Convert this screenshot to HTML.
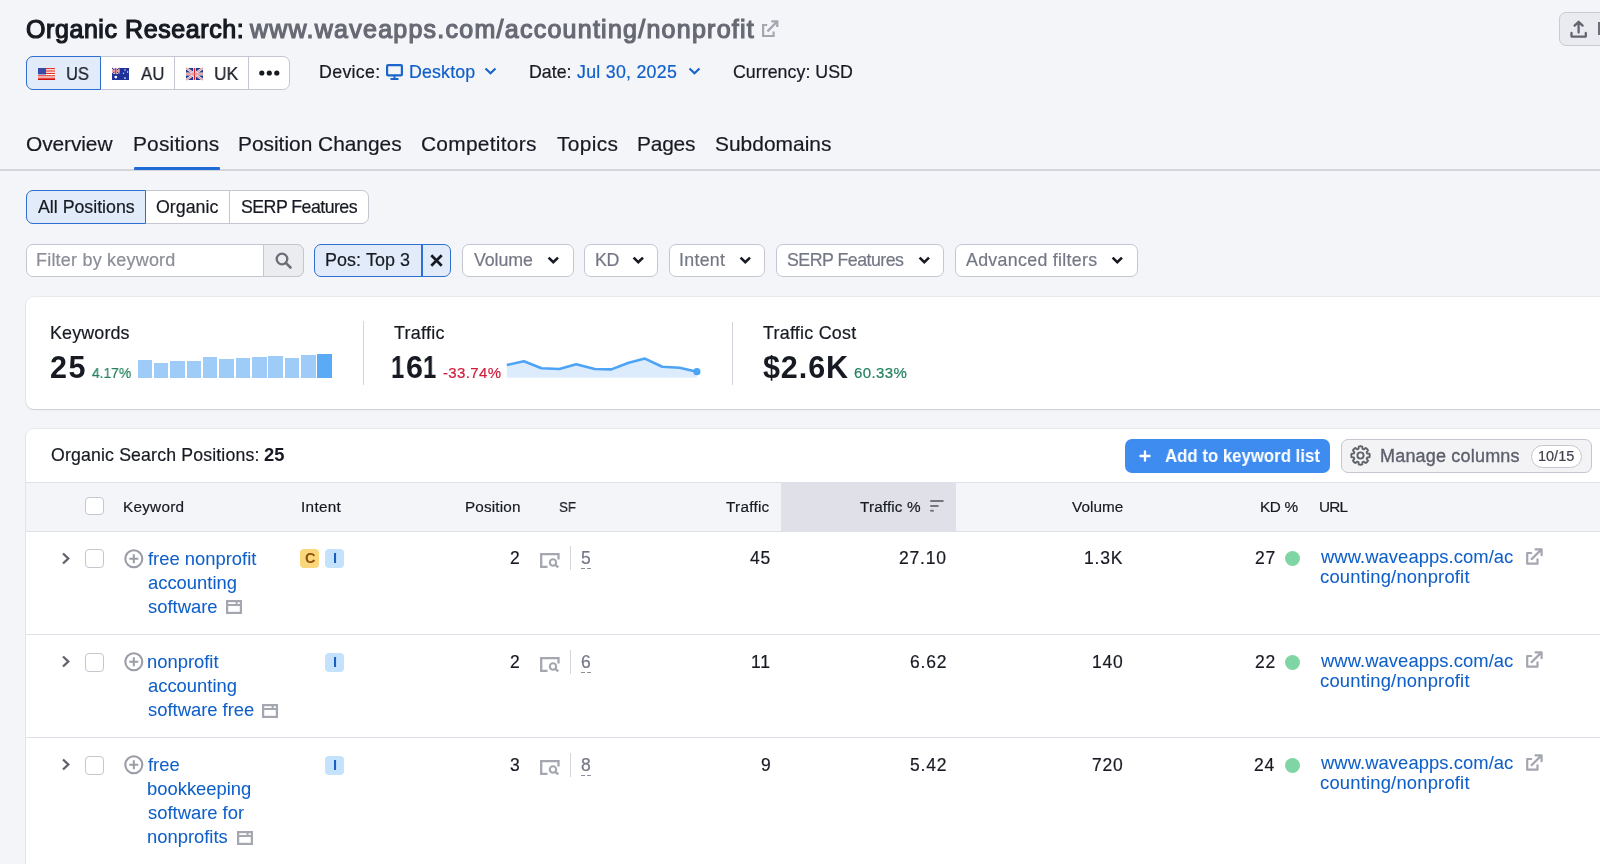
<!DOCTYPE html>
<html><head><meta charset="utf-8"><style>
html,body{margin:0;padding:0}
body{width:1600px;height:864px;overflow:hidden;position:relative;background:#f4f5f9;font-family:"Liberation Sans", sans-serif;}
.t{position:absolute;line-height:1;white-space:nowrap;-webkit-text-stroke:0.2px currentColor;will-change:transform}
svg{overflow:visible}
</style></head><body>
<svg style="position:absolute;left:762px;top:19.5px" width="17" height="17" viewBox="0 0 17 17"><g fill="none" stroke="#a4a6b0" stroke-width="2.2"><path d="M5.2 5H1.1V16H11.6V11.4"/><path d="M5.4 11.4L15 1.8M9.3 1.3H15.3V7.1"/></g></svg>
<div style="position:absolute;left:1559.3px;top:12.2px;width:80.70000000000005px;height:33.8px;box-sizing:border-box;background:#eaebf0;border:1px solid #c9cbd3;border-radius:7px;"></div>
<svg style="position:absolute;left:1569px;top:19px" width="20" height="20" viewBox="0 0 20 20"><g fill="none" stroke="#62646f" stroke-width="2.3" stroke-linecap="round" stroke-linejoin="round"><path d="M5.6 6.6L9.6 2.8L13.6 6.6M9.6 3.2V13.6"/><path d="M2.5 14V17.6H16.8V14"/></g></svg>
<div style="position:absolute;left:1598px;top:21.8px;width:2px;height:12.999999999999996px;box-sizing:border-box;background:#6b6d78;"></div>
<div style="position:absolute;left:26px;top:56px;width:263.5px;height:34px;box-sizing:border-box;background:#fff;border:1px solid #c4c7cf;border-radius:7px;"></div>
<div style="position:absolute;left:26px;top:56px;width:75px;height:34px;box-sizing:border-box;background:#e1ebf9;border:1.5px solid #2f6fd0;border-radius:7px 0 0 7px;"></div>
<div style="position:absolute;left:173.5px;top:57px;width:1.0px;height:32px;box-sizing:border-box;background:#c4c7cf;"></div>
<div style="position:absolute;left:248px;top:57px;width:1px;height:32px;box-sizing:border-box;background:#c4c7cf;"></div>
<svg style="position:absolute;left:38px;top:68px" width="17" height="12" viewBox="0 0 17 12">
<rect width="17" height="12" fill="#fff"/>
<rect y="0" width="17" height="1.2" fill="#e0362b"/><rect y="2.4" width="17" height="1.2" fill="#e0362b"/><rect y="4.8" width="17" height="1.2" fill="#e0362b"/><rect y="7.2" width="17" height="1.2" fill="#e0362b"/><rect y="9.6" width="17" height="1.2" fill="#e0362b"/><rect y="10.8" width="17" height="1.2" fill="#d40f0f"/>
<rect width="8" height="6.5" fill="#3a4aa8"/></svg>
<svg style="position:absolute;left:112px;top:68px" width="17" height="12" viewBox="0 0 17 12">
<rect width="17" height="12" fill="#1f3299"/><rect width="7.5" height="6" fill="#e9c4c8"/>
<path d="M0 0L7.5 6M7.5 0L0 6" stroke="#1f3299" stroke-width="1"/>
<path d="M0 3H7.5" stroke="#e9c4c8" stroke-width="1.6"/><path d="M3.7 0V6" stroke="#e9c4c8" stroke-width="1.6"/><path d="M3.7 0V6" stroke="#d8222b" stroke-width="1.1"/><path d="M0 3H7.5" stroke="#d86a70" stroke-width="0.8"/>
<circle cx="3.8" cy="9.1" r="1.4" fill="#fff"/><circle cx="13" cy="1.9" r=".75" fill="#fff"/><circle cx="15.6" cy="4" r=".75" fill="#fff"/><circle cx="11.5" cy="5.2" r=".7" fill="#dde"/><circle cx="13" cy="10" r=".85" fill="#fff"/></svg>
<svg style="position:absolute;left:186px;top:68px" width="17" height="12" viewBox="0 0 17 12">
<rect width="17" height="12" fill="#22378f"/>
<path d="M0 0L17 12M17 0L0 12" stroke="#f3e6e8" stroke-width="2.3"/><path d="M0 0L17 12M17 0L0 12" stroke="#d9656b" stroke-width="0.7"/>
<path d="M8.5 0V12M0 6H17" stroke="#f3e2e3" stroke-width="3"/><path d="M8.5 0V12" stroke="#d8222b" stroke-width="1.3"/><path d="M0 6H17" stroke="#e0777c" stroke-width="1.1"/></svg>
<svg style="position:absolute;left:259px;top:70px" width="21" height="6" viewBox="0 0 21 6"><circle cx="2.8" cy="3" r="2.6" fill="#171a22"/><circle cx="10.3" cy="3" r="2.6" fill="#171a22"/><circle cx="17.8" cy="3" r="2.6" fill="#171a22"/></svg>
<svg style="position:absolute;left:386px;top:64px" width="17" height="16" viewBox="0 0 17 16"><rect x="1.1" y="1.1" width="14.8" height="10.3" rx="1" fill="none" stroke="#1a64cc" stroke-width="2.2"/><path d="M8.5 12V14.5M4.5 14.9H12.5" stroke="#1a64cc" stroke-width="2"/></svg>
<svg style="position:absolute;left:484px;top:67px" width="13" height="8" viewBox="0 0 13 8"><path d="M1.5 1.5L6.5 6.3L11.5 1.5" fill="none" stroke="#1a64cc" stroke-width="2.2"/></svg>
<svg style="position:absolute;left:687.5px;top:67px" width="13" height="8" viewBox="0 0 13 8"><path d="M1.5 1.5L6.5 6.3L11.5 1.5" fill="none" stroke="#1a64cc" stroke-width="2.2"/></svg>
<div style="position:absolute;left:0px;top:169px;width:1600px;height:1.5px;box-sizing:border-box;background:#d3d5dc;"></div>
<div style="position:absolute;left:134px;top:166.5px;width:85.5px;height:3.1999999999999886px;box-sizing:border-box;background:#1f6ad4;border-radius:1px;"></div>
<div style="position:absolute;left:26px;top:190px;width:342.8px;height:33.5px;box-sizing:border-box;background:#fff;border:1px solid #c4c7cf;border-radius:7px;"></div>
<div style="position:absolute;left:26px;top:190px;width:120px;height:33.5px;box-sizing:border-box;background:#e1ebf9;border:1.5px solid #2f6fd0;border-radius:7px 0 0 7px;"></div>
<div style="position:absolute;left:229px;top:191px;width:1px;height:31.5px;box-sizing:border-box;background:#c4c7cf;"></div>
<div style="position:absolute;left:26px;top:244px;width:277.5px;height:33px;box-sizing:border-box;background:#fff;border:1px solid #c4c7cf;border-radius:7px;"></div>
<div style="position:absolute;left:263px;top:244px;width:40.5px;height:33px;box-sizing:border-box;background:#ebecf0;border:1px solid #c4c7cf;border-radius:0 7px 7px 0;"></div>
<svg style="position:absolute;left:274px;top:251px" width="20" height="20" viewBox="0 0 20 20"><circle cx="8" cy="8" r="5.3" fill="none" stroke="#6b6d78" stroke-width="2.3"/><path d="M11.8 11.8L16.5 16.5" stroke="#6b6d78" stroke-width="2.6" stroke-linecap="round"/></svg>
<div style="position:absolute;left:314.4px;top:244px;width:137.10000000000002px;height:33px;box-sizing:border-box;background:#e1ebf9;border:1.5px solid #2f6fd0;border-radius:7px;"></div>
<div style="position:absolute;left:421px;top:245px;width:1.5px;height:31px;box-sizing:border-box;background:#2f6fd0;"></div>
<svg style="position:absolute;left:430px;top:254px" width="13" height="13" viewBox="0 0 13 13"><path d="M1.3 1.3L11.7 11.7M11.7 1.3L1.3 11.7" stroke="#171a22" stroke-width="2.7"/></svg>
<div style="position:absolute;left:462.4px;top:244px;width:111.39999999999998px;height:33px;box-sizing:border-box;background:#fff;border:1px solid #c4c7cf;border-radius:7px;"></div>
<svg style="position:absolute;left:547px;top:256px" width="13" height="8" viewBox="0 0 13 8"><path d="M1.6 1.6L6.3 6.2L11 1.6" fill="none" stroke="#171a22" stroke-width="2.6"/></svg>
<div style="position:absolute;left:584.4px;top:244px;width:73.80000000000007px;height:33px;box-sizing:border-box;background:#fff;border:1px solid #c4c7cf;border-radius:7px;"></div>
<svg style="position:absolute;left:632px;top:256px" width="13" height="8" viewBox="0 0 13 8"><path d="M1.6 1.6L6.3 6.2L11 1.6" fill="none" stroke="#171a22" stroke-width="2.6"/></svg>
<div style="position:absolute;left:669px;top:244px;width:96px;height:33px;box-sizing:border-box;background:#fff;border:1px solid #c4c7cf;border-radius:7px;"></div>
<svg style="position:absolute;left:738.5px;top:256px" width="13" height="8" viewBox="0 0 13 8"><path d="M1.6 1.6L6.3 6.2L11 1.6" fill="none" stroke="#171a22" stroke-width="2.6"/></svg>
<div style="position:absolute;left:776px;top:244px;width:168.29999999999995px;height:33px;box-sizing:border-box;background:#fff;border:1px solid #c4c7cf;border-radius:7px;"></div>
<svg style="position:absolute;left:918px;top:256px" width="13" height="8" viewBox="0 0 13 8"><path d="M1.6 1.6L6.3 6.2L11 1.6" fill="none" stroke="#171a22" stroke-width="2.6"/></svg>
<div style="position:absolute;left:954.8px;top:244px;width:183.4000000000001px;height:33px;box-sizing:border-box;background:#fff;border:1px solid #c4c7cf;border-radius:7px;"></div>
<svg style="position:absolute;left:1111px;top:256px" width="13" height="8" viewBox="0 0 13 8"><path d="M1.6 1.6L6.3 6.2L11 1.6" fill="none" stroke="#171a22" stroke-width="2.6"/></svg>
<div style="position:absolute;left:26px;top:297px;width:1614px;height:112px;box-sizing:border-box;background:#fff;border-radius:8px;box-shadow:0 1px 1.5px rgba(0,0,0,0.12), 0 0 0 1px rgba(0,0,0,0.045);"></div>
<div style="position:absolute;left:137.5px;top:359.7px;width:14.599999999999994px;height:17.900000000000034px;box-sizing:border-box;background:#9ecbf8;"></div>
<div style="position:absolute;left:153.85px;top:362.7px;width:14.599999999999994px;height:14.900000000000034px;box-sizing:border-box;background:#9ecbf8;"></div>
<div style="position:absolute;left:170.2px;top:360.8px;width:14.600000000000023px;height:16.80000000000001px;box-sizing:border-box;background:#9ecbf8;"></div>
<div style="position:absolute;left:186.55px;top:360.8px;width:14.599999999999994px;height:16.80000000000001px;box-sizing:border-box;background:#9ecbf8;"></div>
<div style="position:absolute;left:202.9px;top:357px;width:14.599999999999994px;height:20.600000000000023px;box-sizing:border-box;background:#9ecbf8;"></div>
<div style="position:absolute;left:219.25px;top:358.6px;width:14.599999999999994px;height:19.0px;box-sizing:border-box;background:#9ecbf8;"></div>
<div style="position:absolute;left:235.6px;top:357.8px;width:14.599999999999994px;height:19.80000000000001px;box-sizing:border-box;background:#9ecbf8;"></div>
<div style="position:absolute;left:251.95px;top:357px;width:14.600000000000023px;height:20.600000000000023px;box-sizing:border-box;background:#9ecbf8;"></div>
<div style="position:absolute;left:268.3px;top:355.9px;width:14.599999999999966px;height:21.700000000000045px;box-sizing:border-box;background:#9ecbf8;"></div>
<div style="position:absolute;left:284.65px;top:357.8px;width:14.600000000000023px;height:19.80000000000001px;box-sizing:border-box;background:#9ecbf8;"></div>
<div style="position:absolute;left:301.0px;top:354.8px;width:14.600000000000023px;height:22.80000000000001px;box-sizing:border-box;background:#9ecbf8;"></div>
<div style="position:absolute;left:317.35px;top:353.7px;width:14.599999999999966px;height:23.900000000000034px;box-sizing:border-box;background:#5aaaf5;"></div>
<div style="position:absolute;left:362.5px;top:321px;width:1.5px;height:64px;box-sizing:border-box;background:#d3d5dc;"></div>
<svg style="position:absolute;left:500px;top:350px" width="210" height="30" viewBox="0 0 210 30"><path d="M6.8,15.0 L23.9,11.3 L41.5,18.3 L59.3,19.0 L76.2,14.3 L94.7,19.0 L111.3,19.4 L128.7,12.7 L144.9,8.6 L162.2,16.7 L179.6,17.8 L196.9,21.7 L196.9,27.8 L6.8,27.8 Z" fill="#dcecfc"/><polyline points="6.8,15.0 23.9,11.3 41.5,18.3 59.3,19.0 76.2,14.3 94.7,19.0 111.3,19.4 128.7,12.7 144.9,8.6 162.2,16.7 179.6,17.8 196.9,21.7" fill="none" stroke="#4da3f5" stroke-width="2.6" stroke-linejoin="round"/><circle cx="196.89999999999998" cy="21.69999999999999" r="3.6" fill="#4da3f5"/></svg>
<div style="position:absolute;left:731.7px;top:321.7px;width:1.5px;height:63.30000000000001px;box-sizing:border-box;background:#d3d5dc;"></div>
<div style="position:absolute;left:26px;top:429px;width:1614px;height:471px;box-sizing:border-box;background:#fff;border-radius:8px;box-shadow:0 1px 1.5px rgba(0,0,0,0.12), 0 0 0 1px rgba(0,0,0,0.045);"></div>
<div style="position:absolute;left:1125.3px;top:439px;width:205.20000000000005px;height:34px;box-sizing:border-box;background:#3f8cf0;border-radius:7px;"></div>
<svg style="position:absolute;left:1139px;top:450px" width="12" height="12" viewBox="0 0 12 12"><path d="M6 0.5V11.5M0.5 6H11.5" stroke="#fff" stroke-width="2.3"/></svg>
<div style="position:absolute;left:1341.2px;top:439px;width:251.20000000000005px;height:34px;box-sizing:border-box;background:#f3f3f6;border:1px solid #c4c7cf;border-radius:7px;"></div>
<svg style="position:absolute;left:1349.9px;top:445.1px" width="21" height="21" viewBox="0 0 21 21"><g fill="none" stroke="#5f616b" stroke-width="1.9" stroke-linejoin="round"><path d="M10.50,1.30 L10.74,1.30 L10.98,1.31 L11.22,1.33 L11.46,1.35 L11.70,1.39 L11.93,1.44 L12.15,1.58 L12.32,1.96 L12.37,2.72 L12.40,3.41 L12.50,3.74 L12.65,3.89 L12.81,3.98 L12.97,4.06 L13.14,4.13 L13.31,4.19 L13.48,4.26 L13.65,4.31 L13.86,4.31 L14.17,4.14 L14.68,3.67 L15.25,3.18 L15.64,3.02 L15.89,3.08 L16.10,3.21 L16.29,3.35 L16.47,3.50 L16.66,3.66 L16.83,3.83 L17.01,3.99 L17.17,4.17 L17.34,4.34 L17.50,4.53 L17.65,4.71 L17.79,4.90 L17.92,5.11 L17.98,5.36 L17.82,5.75 L17.33,6.32 L16.86,6.83 L16.69,7.14 L16.69,7.35 L16.74,7.52 L16.81,7.69 L16.87,7.86 L16.94,8.03 L17.02,8.19 L17.11,8.35 L17.26,8.50 L17.59,8.60 L18.28,8.63 L19.04,8.68 L19.42,8.85 L19.56,9.07 L19.61,9.30 L19.65,9.54 L19.67,9.78 L19.69,10.02 L19.70,10.26 L19.70,10.50 L19.70,10.74 L19.69,10.98 L19.67,11.22 L19.65,11.46 L19.61,11.70 L19.56,11.93 L19.42,12.15 L19.04,12.32 L18.28,12.37 L17.59,12.40 L17.26,12.50 L17.11,12.65 L17.02,12.81 L16.94,12.97 L16.87,13.14 L16.81,13.31 L16.74,13.48 L16.69,13.65 L16.69,13.86 L16.86,14.17 L17.33,14.68 L17.82,15.25 L17.98,15.64 L17.92,15.89 L17.79,16.10 L17.65,16.29 L17.50,16.47 L17.34,16.66 L17.17,16.83 L17.01,17.01 L16.83,17.17 L16.66,17.34 L16.47,17.50 L16.29,17.65 L16.10,17.79 L15.89,17.92 L15.64,17.98 L15.25,17.82 L14.68,17.33 L14.17,16.86 L13.86,16.69 L13.65,16.69 L13.48,16.74 L13.31,16.81 L13.14,16.87 L12.97,16.94 L12.81,17.02 L12.65,17.11 L12.50,17.26 L12.40,17.59 L12.37,18.28 L12.32,19.04 L12.15,19.42 L11.93,19.56 L11.70,19.61 L11.46,19.65 L11.22,19.67 L10.98,19.69 L10.74,19.70 L10.50,19.70 L10.26,19.70 L10.02,19.69 L9.78,19.67 L9.54,19.65 L9.30,19.61 L9.07,19.56 L8.85,19.42 L8.68,19.04 L8.63,18.28 L8.60,17.59 L8.50,17.26 L8.35,17.11 L8.19,17.02 L8.03,16.94 L7.86,16.87 L7.69,16.81 L7.52,16.74 L7.35,16.69 L7.14,16.69 L6.83,16.86 L6.32,17.33 L5.75,17.82 L5.36,17.98 L5.11,17.92 L4.90,17.79 L4.71,17.65 L4.53,17.50 L4.34,17.34 L4.17,17.17 L3.99,17.01 L3.83,16.83 L3.66,16.66 L3.50,16.47 L3.35,16.29 L3.21,16.10 L3.08,15.89 L3.02,15.64 L3.18,15.25 L3.67,14.68 L4.14,14.17 L4.31,13.86 L4.31,13.65 L4.26,13.48 L4.19,13.31 L4.13,13.14 L4.06,12.97 L3.98,12.81 L3.89,12.65 L3.74,12.50 L3.41,12.40 L2.72,12.37 L1.96,12.32 L1.58,12.15 L1.44,11.93 L1.39,11.70 L1.35,11.46 L1.33,11.22 L1.31,10.98 L1.30,10.74 L1.30,10.50 L1.30,10.26 L1.31,10.02 L1.33,9.78 L1.35,9.54 L1.39,9.30 L1.44,9.07 L1.58,8.85 L1.96,8.68 L2.72,8.63 L3.41,8.60 L3.74,8.50 L3.89,8.35 L3.98,8.19 L4.06,8.03 L4.13,7.86 L4.19,7.69 L4.26,7.52 L4.31,7.35 L4.31,7.14 L4.14,6.83 L3.67,6.32 L3.18,5.75 L3.02,5.36 L3.08,5.11 L3.21,4.90 L3.35,4.71 L3.50,4.53 L3.66,4.34 L3.83,4.17 L3.99,3.99 L4.17,3.83 L4.34,3.66 L4.53,3.50 L4.71,3.35 L4.90,3.21 L5.11,3.08 L5.36,3.02 L5.75,3.18 L6.32,3.67 L6.83,4.14 L7.14,4.31 L7.35,4.31 L7.52,4.26 L7.69,4.19 L7.86,4.13 L8.03,4.06 L8.19,3.98 L8.35,3.89 L8.50,3.74 L8.60,3.41 L8.63,2.72 L8.68,1.96 L8.85,1.58 L9.07,1.44 L9.30,1.39 L9.54,1.35 L9.78,1.33 L10.02,1.31 L10.26,1.30Z"/><circle cx="10.5" cy="10.5" r="3.1"/></g></svg>
<div style="position:absolute;left:1531px;top:444.5px;width:51.299999999999955px;height:23.30000000000001px;box-sizing:border-box;background:#fff;border:1px solid #c4c7cf;border-radius:12px;"></div>
<div style="position:absolute;left:26px;top:481.5px;width:1614px;height:50.0px;box-sizing:border-box;background:#f4f5f9;border-top:1px solid #e0e1e8;border-bottom:1px solid #e0e1e8;"></div>
<div style="position:absolute;left:780.5px;top:482.5px;width:175.89999999999998px;height:48.0px;box-sizing:border-box;background:#e0e1e8;"></div>
<div style="position:absolute;left:84.5px;top:496.6px;width:19.099999999999994px;height:18.899999999999977px;box-sizing:border-box;background:#fff;border:1px solid #c4c7cf;border-radius:4px;"></div>
<svg style="position:absolute;left:929px;top:499px" width="15" height="13" viewBox="0 0 15 13"><path d="M2 1.9H13.8M2 6.9H8.8M2 11.8H4" stroke="#74767f" stroke-width="2" stroke-linecap="round"/></svg>
<svg style="position:absolute;left:61px;top:551.7px" width="10" height="13" viewBox="0 0 10 13"><path d="M2 1.5L7.3 6.5L2 11.5" fill="none" stroke="#5f616b" stroke-width="2.3"/></svg>
<div style="position:absolute;left:84.5px;top:549px;width:19.5px;height:19.200000000000045px;box-sizing:border-box;background:#fff;border:1px solid #c4c7cf;border-radius:4px;"></div>
<svg style="position:absolute;left:123.5px;top:548.5px" width="20" height="20" viewBox="0 0 20 20"><circle cx="9.8" cy="9.8" r="8.5" fill="none" stroke="#9a9ca6" stroke-width="2.1"/><path d="M9.8 5.3V14.3M5.3 9.8H14.3" stroke="#9a9ca6" stroke-width="2"/></svg>
<svg style="position:absolute;left:225.7px;top:599.6px" width="16" height="14" viewBox="0 0 16 14"><rect x="1.1" y="1.1" width="13.8" height="11.8" fill="none" stroke="#a4a6b0" stroke-width="2.2"/><path d="M1 4.9H15M10.6 1V4.9" stroke="#a4a6b0" stroke-width="2"/></svg>
<div style="position:absolute;left:300px;top:549px;width:19.30000000000001px;height:19.299999999999955px;box-sizing:border-box;background:#fbd77b;border-radius:4px;"></div>
<div style="position:absolute;left:325px;top:549px;width:19.30000000000001px;height:19.299999999999955px;box-sizing:border-box;background:#c5e2fc;border-radius:4px;"></div>
<svg style="position:absolute;left:539.5px;top:553px" width="20" height="15" viewBox="0 0 20 15"><path d="M18.5 6.5V1.2H1.2V13.8H7.5" fill="none" stroke="#a4a6b0" stroke-width="2.3"/><circle cx="13" cy="9.5" r="3.2" fill="none" stroke="#a4a6b0" stroke-width="2.1"/><path d="M15.3 11.8L18.3 14.3" stroke="#a4a6b0" stroke-width="2.3"/></svg>
<div style="position:absolute;left:569.6px;top:546.4px;width:1.2999999999999545px;height:24.0px;box-sizing:border-box;background:#d3d5dc;"></div>
<div style="position:absolute;left:580.5px;top:568.3px;width:10.5px;height:1.2000000000000455px;box-sizing:border-box;background-image:linear-gradient(90deg,#8b8d97 0 40%,transparent 40% 60%,#8b8d97 60%);"></div>
<div style="position:absolute;left:1285px;top:551.3px;width:15px;height:15.0px;box-sizing:border-box;background:#7fd6a4;border-radius:50%;"></div>
<svg style="position:absolute;left:1525.6px;top:547.9px" width="18" height="17" viewBox="0 0 18 17"><g fill="none" stroke="#a4a6b0" stroke-width="2.2" stroke-linecap="round" stroke-linejoin="round"><path d="M5.2 5H1.2V15.7H11.5V11.3"/><path d="M5.6 11.1L15 1.9M9.5 1.3H15.6V7.2"/></g></svg>
<div style="position:absolute;left:26px;top:634.0px;width:1614px;height:1.0px;box-sizing:border-box;background:#e0e1e8;"></div>
<svg style="position:absolute;left:61px;top:655.2px" width="10" height="13" viewBox="0 0 10 13"><path d="M2 1.5L7.3 6.5L2 11.5" fill="none" stroke="#5f616b" stroke-width="2.3"/></svg>
<div style="position:absolute;left:84.5px;top:652.5px;width:19.5px;height:19.200000000000045px;box-sizing:border-box;background:#fff;border:1px solid #c4c7cf;border-radius:4px;"></div>
<svg style="position:absolute;left:123.5px;top:652.0px" width="20" height="20" viewBox="0 0 20 20"><circle cx="9.8" cy="9.8" r="8.5" fill="none" stroke="#9a9ca6" stroke-width="2.1"/><path d="M9.8 5.3V14.3M5.3 9.8H14.3" stroke="#9a9ca6" stroke-width="2"/></svg>
<svg style="position:absolute;left:262px;top:703.6px" width="16" height="14" viewBox="0 0 16 14"><rect x="1.1" y="1.1" width="13.8" height="11.8" fill="none" stroke="#a4a6b0" stroke-width="2.2"/><path d="M1 4.9H15M10.6 1V4.9" stroke="#a4a6b0" stroke-width="2"/></svg>
<div style="position:absolute;left:325px;top:652.5px;width:19.30000000000001px;height:19.299999999999955px;box-sizing:border-box;background:#c5e2fc;border-radius:4px;"></div>
<svg style="position:absolute;left:539.5px;top:656.5px" width="20" height="15" viewBox="0 0 20 15"><path d="M18.5 6.5V1.2H1.2V13.8H7.5" fill="none" stroke="#a4a6b0" stroke-width="2.3"/><circle cx="13" cy="9.5" r="3.2" fill="none" stroke="#a4a6b0" stroke-width="2.1"/><path d="M15.3 11.8L18.3 14.3" stroke="#a4a6b0" stroke-width="2.3"/></svg>
<div style="position:absolute;left:569.6px;top:649.9px;width:1.2999999999999545px;height:24.0px;box-sizing:border-box;background:#d3d5dc;"></div>
<div style="position:absolute;left:580.5px;top:671.8px;width:10.5px;height:1.2000000000000455px;box-sizing:border-box;background-image:linear-gradient(90deg,#8b8d97 0 40%,transparent 40% 60%,#8b8d97 60%);"></div>
<div style="position:absolute;left:1285px;top:654.8px;width:15px;height:15.0px;box-sizing:border-box;background:#7fd6a4;border-radius:50%;"></div>
<svg style="position:absolute;left:1525.6px;top:651.4px" width="18" height="17" viewBox="0 0 18 17"><g fill="none" stroke="#a4a6b0" stroke-width="2.2" stroke-linecap="round" stroke-linejoin="round"><path d="M5.2 5H1.2V15.7H11.5V11.3"/><path d="M5.6 11.1L15 1.9M9.5 1.3H15.6V7.2"/></g></svg>
<div style="position:absolute;left:26px;top:737.0px;width:1614px;height:1.0px;box-sizing:border-box;background:#e0e1e8;"></div>
<svg style="position:absolute;left:61px;top:758.2px" width="10" height="13" viewBox="0 0 10 13"><path d="M2 1.5L7.3 6.5L2 11.5" fill="none" stroke="#5f616b" stroke-width="2.3"/></svg>
<div style="position:absolute;left:84.5px;top:755.5px;width:19.5px;height:19.200000000000045px;box-sizing:border-box;background:#fff;border:1px solid #c4c7cf;border-radius:4px;"></div>
<svg style="position:absolute;left:123.5px;top:755.0px" width="20" height="20" viewBox="0 0 20 20"><circle cx="9.8" cy="9.8" r="8.5" fill="none" stroke="#9a9ca6" stroke-width="2.1"/><path d="M9.8 5.3V14.3M5.3 9.8H14.3" stroke="#9a9ca6" stroke-width="2"/></svg>
<svg style="position:absolute;left:237.2px;top:831.2px" width="16" height="14" viewBox="0 0 16 14"><rect x="1.1" y="1.1" width="13.8" height="11.8" fill="none" stroke="#a4a6b0" stroke-width="2.2"/><path d="M1 4.9H15M10.6 1V4.9" stroke="#a4a6b0" stroke-width="2"/></svg>
<div style="position:absolute;left:325px;top:755.5px;width:19.30000000000001px;height:19.299999999999955px;box-sizing:border-box;background:#c5e2fc;border-radius:4px;"></div>
<svg style="position:absolute;left:539.5px;top:759.5px" width="20" height="15" viewBox="0 0 20 15"><path d="M18.5 6.5V1.2H1.2V13.8H7.5" fill="none" stroke="#a4a6b0" stroke-width="2.3"/><circle cx="13" cy="9.5" r="3.2" fill="none" stroke="#a4a6b0" stroke-width="2.1"/><path d="M15.3 11.8L18.3 14.3" stroke="#a4a6b0" stroke-width="2.3"/></svg>
<div style="position:absolute;left:569.6px;top:752.9px;width:1.2999999999999545px;height:24.0px;box-sizing:border-box;background:#d3d5dc;"></div>
<div style="position:absolute;left:580.5px;top:774.8px;width:10.5px;height:1.2000000000000455px;box-sizing:border-box;background-image:linear-gradient(90deg,#8b8d97 0 40%,transparent 40% 60%,#8b8d97 60%);"></div>
<div style="position:absolute;left:1285px;top:757.8px;width:15px;height:15.0px;box-sizing:border-box;background:#7fd6a4;border-radius:50%;"></div>
<svg style="position:absolute;left:1525.6px;top:754.4px" width="18" height="17" viewBox="0 0 18 17"><g fill="none" stroke="#a4a6b0" stroke-width="2.2" stroke-linecap="round" stroke-linejoin="round"><path d="M5.2 5H1.2V15.7H11.5V11.3"/><path d="M5.6 11.1L15 1.9M9.5 1.3H15.6V7.2"/></g></svg>
<div class="t" style="left:25.90px;top:17.00px;font-size:25px;color:#171a22;font-weight:normal;letter-spacing:0.576px;-webkit-text-stroke:1.2px currentColor;">Organic Research:</div>
<div class="t" style="left:250.30px;top:17.00px;font-size:25px;color:#676974;font-weight:normal;letter-spacing:1.255px;-webkit-text-stroke:1.2px currentColor;">www.waveapps.com/accounting/nonprofit</div>
<div class="t" style="left:66.30px;top:65.00px;font-size:18.3px;color:#171a22;font-weight:normal;letter-spacing:0.000px;transform:scaleX(0.9007);transform-origin:0 0;">US</div>
<div class="t" style="left:140.50px;top:65.00px;font-size:18.3px;color:#171a22;font-weight:normal;letter-spacing:0.000px;transform:scaleX(0.9217);transform-origin:0 0;">AU</div>
<div class="t" style="left:214.05px;top:65.00px;font-size:18.3px;color:#171a22;font-weight:normal;letter-spacing:0.000px;transform:scaleX(0.9503);transform-origin:0 0;">UK</div>
<div class="t" style="left:318.50px;top:64.00px;font-size:17.8px;color:#171a22;font-weight:normal;letter-spacing:0.325px;">Device:</div>
<div class="t" style="left:408.70px;top:64.00px;font-size:17.8px;color:#0f5fc9;font-weight:normal;letter-spacing:0.160px;">Desktop</div>
<div class="t" style="left:529.40px;top:64.00px;font-size:17.8px;color:#171a22;font-weight:normal;letter-spacing:0.010px;">Date:</div>
<div class="t" style="left:577.30px;top:64.00px;font-size:17.8px;color:#0f5fc9;font-weight:normal;letter-spacing:0.264px;">Jul 30, 2025</div>
<div class="t" style="left:732.50px;top:64.00px;font-size:17.8px;color:#171a22;font-weight:normal;letter-spacing:0.032px;">Currency: USD</div>
<div class="t" style="left:26.20px;top:134.00px;font-size:20.9px;color:#171a22;font-weight:normal;letter-spacing:-0.082px;">Overview</div>
<div class="t" style="left:133.40px;top:134.00px;font-size:20.9px;color:#171a22;font-weight:normal;letter-spacing:0.185px;">Positions</div>
<div class="t" style="left:238.40px;top:134.00px;font-size:20.9px;color:#171a22;font-weight:normal;letter-spacing:-0.007px;">Position Changes</div>
<div class="t" style="left:421.00px;top:134.00px;font-size:20.9px;color:#171a22;font-weight:normal;letter-spacing:0.283px;">Competitors</div>
<div class="t" style="left:557.00px;top:134.00px;font-size:20.9px;color:#171a22;font-weight:normal;letter-spacing:0.346px;">Topics</div>
<div class="t" style="left:637.00px;top:134.00px;font-size:20.9px;color:#171a22;font-weight:normal;letter-spacing:-0.197px;">Pages</div>
<div class="t" style="left:715.00px;top:134.00px;font-size:20.9px;color:#171a22;font-weight:normal;letter-spacing:0.035px;">Subdomains</div>
<div class="t" style="left:37.50px;top:199.00px;font-size:17.8px;color:#171a22;font-weight:normal;letter-spacing:-0.013px;">All Positions</div>
<div class="t" style="left:156.00px;top:199.00px;font-size:17.8px;color:#171a22;font-weight:normal;letter-spacing:0.022px;">Organic</div>
<div class="t" style="left:240.50px;top:199.00px;font-size:17.8px;color:#171a22;font-weight:normal;letter-spacing:-0.553px;">SERP Features</div>
<div class="t" style="left:36.30px;top:251.00px;font-size:18px;color:#8b8d97;font-weight:normal;letter-spacing:0.205px;">Filter by keyword</div>
<div class="t" style="left:324.90px;top:252.00px;font-size:17.9px;color:#171a22;font-weight:normal;letter-spacing:0.091px;">Pos: Top 3</div>
<div class="t" style="left:474.00px;top:252.00px;font-size:17.8px;color:#747784;font-weight:normal;letter-spacing:-0.084px;">Volume</div>
<div class="t" style="left:594.60px;top:252.00px;font-size:17.8px;color:#747784;font-weight:normal;letter-spacing:-0.460px;">KD</div>
<div class="t" style="left:679.00px;top:252.00px;font-size:17.8px;color:#747784;font-weight:normal;letter-spacing:0.290px;">Intent</div>
<div class="t" style="left:786.80px;top:252.00px;font-size:17.8px;color:#747784;font-weight:normal;letter-spacing:-0.520px;">SERP Features</div>
<div class="t" style="left:966.00px;top:252.00px;font-size:17.8px;color:#747784;font-weight:normal;letter-spacing:0.312px;">Advanced filters</div>
<div class="t" style="left:49.80px;top:325.00px;font-size:17.9px;color:#171a22;font-weight:normal;letter-spacing:0.142px;">Keywords</div>
<div class="t" style="left:50.40px;top:352.00px;font-size:30.5px;color:#171a22;font-weight:bold;letter-spacing:1.537px;-webkit-text-stroke:0;">25</div>
<div class="t" style="left:92.20px;top:365.00px;font-size:15px;color:#24805e;font-weight:normal;letter-spacing:0.000px;transform:scaleX(0.9196);transform-origin:0 0;">4.17%</div>
<div class="t" style="left:393.50px;top:325.00px;font-size:17.9px;color:#171a22;font-weight:normal;letter-spacing:0.306px;">Traffic</div>
<div class="t" style="left:391.00px;top:352.00px;font-size:30.5px;color:#171a22;font-weight:bold;letter-spacing:0.000px;-webkit-text-stroke:0;transform:scaleX(0.78);transform-origin:0 0;">1</div>
<div class="t" style="left:405.50px;top:352.00px;font-size:30.5px;color:#171a22;font-weight:bold;letter-spacing:0.000px;-webkit-text-stroke:0;">6</div>
<div class="t" style="left:422.80px;top:352.00px;font-size:30.5px;color:#171a22;font-weight:bold;letter-spacing:0.000px;-webkit-text-stroke:0;transform:scaleX(0.78);transform-origin:0 0;">1</div>
<div class="t" style="left:442.50px;top:365.00px;font-size:15px;color:#cc1f3d;font-weight:normal;letter-spacing:0.378px;">-33.74%</div>
<div class="t" style="left:762.90px;top:325.00px;font-size:17.9px;color:#171a22;font-weight:normal;letter-spacing:0.246px;">Traffic Cost</div>
<div class="t" style="left:762.90px;top:352.00px;font-size:30.5px;color:#171a22;font-weight:bold;letter-spacing:0.910px;-webkit-text-stroke:0;">$2.6K</div>
<div class="t" style="left:854.00px;top:365.00px;font-size:15px;color:#24805e;font-weight:normal;letter-spacing:0.413px;">60.33%</div>
<div class="t" style="left:50.60px;top:447.00px;font-size:17.7px;color:#171a22;font-weight:normal;letter-spacing:0.160px;">Organic Search Positions:</div>
<div class="t" style="left:263.80px;top:447.00px;font-size:17.7px;color:#171a22;font-weight:bold;letter-spacing:0.000px;-webkit-text-stroke:0;transform:scaleX(1.0385);transform-origin:0 0;">25</div>
<div class="t" style="left:1164.50px;top:447.00px;font-size:18.8px;color:#fff;font-weight:bold;letter-spacing:0.000px;-webkit-text-stroke:0;transform:scaleX(0.8944);transform-origin:0 0;">Add to keyword list</div>
<div class="t" style="left:1380.00px;top:447.00px;font-size:18px;color:#5d606c;font-weight:normal;letter-spacing:0.187px;-webkit-text-stroke:0.35px currentColor;">Manage columns</div>
<div class="t" style="left:1537.80px;top:449.00px;font-size:14.5px;color:#3f414c;font-weight:normal;letter-spacing:-0.005px;">10/15</div>
<div class="t" style="left:123.00px;top:499.00px;font-size:15.3px;color:#171a22;font-weight:normal;letter-spacing:0.249px;">Keyword</div>
<div class="t" style="left:301.10px;top:499.00px;font-size:15.3px;color:#171a22;font-weight:normal;letter-spacing:0.316px;">Intent</div>
<div class="t" style="left:464.90px;top:499.00px;font-size:15.3px;color:#171a22;font-weight:normal;letter-spacing:0.141px;">Position</div>
<div class="t" style="left:558.50px;top:499.00px;font-size:15.3px;color:#171a22;font-weight:normal;letter-spacing:0.000px;transform:scaleX(0.87);transform-origin:0 0;">SF</div>
<div class="t" style="left:726.20px;top:499.00px;font-size:15.3px;color:#171a22;font-weight:normal;letter-spacing:0.267px;">Traffic</div>
<div class="t" style="left:860.00px;top:499.00px;font-size:15.3px;color:#171a22;font-weight:normal;letter-spacing:0.138px;">Traffic %</div>
<div class="t" style="left:1071.80px;top:499.00px;font-size:15.3px;color:#171a22;font-weight:normal;letter-spacing:0.037px;">Volume</div>
<div class="t" style="left:1260.20px;top:499.00px;font-size:15.3px;color:#171a22;font-weight:normal;letter-spacing:-0.333px;">KD %</div>
<div class="t" style="left:1319.00px;top:499.00px;font-size:15.3px;color:#171a22;font-weight:normal;letter-spacing:-0.847px;">URL</div>
<div class="t" style="left:148.00px;top:550.00px;font-size:18.4px;color:#0f5fc9;font-weight:normal;letter-spacing:0.000px;-webkit-text-stroke:0.05px currentColor;">free nonprofit</div>
<div class="t" style="left:148.00px;top:574.00px;font-size:18.4px;color:#0f5fc9;font-weight:normal;letter-spacing:0.000px;-webkit-text-stroke:0.05px currentColor;">accounting</div>
<div class="t" style="left:148.00px;top:598.00px;font-size:18.4px;color:#0f5fc9;font-weight:normal;letter-spacing:0.000px;-webkit-text-stroke:0.05px currentColor;">software</div>
<div class="t" style="left:305.20px;top:551.00px;font-size:14.5px;color:#8a4f0c;font-weight:bold;letter-spacing:0.000px;-webkit-text-stroke:0;">C</div>
<div class="t" style="left:332.80px;top:551.00px;font-size:14.5px;color:#1a5fbf;font-weight:bold;letter-spacing:0.000px;-webkit-text-stroke:0;">I</div>
<div class="t" style="left:510.40px;top:550.00px;font-size:17.5px;color:#171a22;font-weight:normal;letter-spacing:0.800px;">2</div>
<div class="t" style="left:580.90px;top:550.00px;font-size:17.5px;color:#747784;font-weight:normal;letter-spacing:0.000px;">5</div>
<div class="t" style="left:750.07px;top:550.00px;font-size:17.5px;color:#171a22;font-weight:normal;letter-spacing:0.800px;">45</div>
<div class="t" style="left:898.74px;top:550.00px;font-size:17.5px;color:#171a22;font-weight:normal;letter-spacing:0.800px;">27.10</div>
<div class="t" style="left:1084.37px;top:550.00px;font-size:17.5px;color:#171a22;font-weight:normal;letter-spacing:0.800px;">1.3K</div>
<div class="t" style="left:1254.87px;top:550.00px;font-size:17.5px;color:#171a22;font-weight:normal;letter-spacing:0.800px;">27</div>
<div class="t" style="left:1321.00px;top:548.00px;font-size:18.4px;color:#0f5fc9;font-weight:normal;letter-spacing:0.064px;-webkit-text-stroke:0.05px currentColor;">www.waveapps.com/ac</div>
<div class="t" style="left:1320.00px;top:568.00px;font-size:18.4px;color:#0f5fc9;font-weight:normal;letter-spacing:0.194px;-webkit-text-stroke:0.05px currentColor;">counting/nonprofit</div>
<div class="t" style="left:147.00px;top:653.00px;font-size:18.4px;color:#0f5fc9;font-weight:normal;letter-spacing:0.000px;-webkit-text-stroke:0.05px currentColor;">nonprofit</div>
<div class="t" style="left:148.00px;top:677.00px;font-size:18.4px;color:#0f5fc9;font-weight:normal;letter-spacing:0.000px;-webkit-text-stroke:0.05px currentColor;">accounting</div>
<div class="t" style="left:148.00px;top:701.00px;font-size:18.4px;color:#0f5fc9;font-weight:normal;letter-spacing:0.000px;-webkit-text-stroke:0.05px currentColor;">software free</div>
<div class="t" style="left:332.80px;top:655.00px;font-size:14.5px;color:#1a5fbf;font-weight:bold;letter-spacing:0.000px;-webkit-text-stroke:0;">I</div>
<div class="t" style="left:510.40px;top:654.00px;font-size:17.5px;color:#171a22;font-weight:normal;letter-spacing:0.800px;">2</div>
<div class="t" style="left:580.90px;top:654.00px;font-size:17.5px;color:#747784;font-weight:normal;letter-spacing:0.000px;">6</div>
<div class="t" style="left:751.37px;top:654.00px;font-size:17.5px;color:#171a22;font-weight:normal;letter-spacing:0.800px;">11</div>
<div class="t" style="left:910.27px;top:654.00px;font-size:17.5px;color:#171a22;font-weight:normal;letter-spacing:0.800px;">6.62</div>
<div class="t" style="left:1092.03px;top:654.00px;font-size:17.5px;color:#171a22;font-weight:normal;letter-spacing:0.800px;">140</div>
<div class="t" style="left:1254.87px;top:654.00px;font-size:17.5px;color:#171a22;font-weight:normal;letter-spacing:0.800px;">22</div>
<div class="t" style="left:1321.00px;top:652.00px;font-size:18.4px;color:#0f5fc9;font-weight:normal;letter-spacing:0.064px;-webkit-text-stroke:0.05px currentColor;">www.waveapps.com/ac</div>
<div class="t" style="left:1320.00px;top:672.00px;font-size:18.4px;color:#0f5fc9;font-weight:normal;letter-spacing:0.194px;-webkit-text-stroke:0.05px currentColor;">counting/nonprofit</div>
<div class="t" style="left:148.00px;top:756.00px;font-size:18.4px;color:#0f5fc9;font-weight:normal;letter-spacing:0.000px;-webkit-text-stroke:0.05px currentColor;">free</div>
<div class="t" style="left:147.00px;top:780.00px;font-size:18.4px;color:#0f5fc9;font-weight:normal;letter-spacing:0.000px;-webkit-text-stroke:0.05px currentColor;">bookkeeping</div>
<div class="t" style="left:148.00px;top:804.00px;font-size:18.4px;color:#0f5fc9;font-weight:normal;letter-spacing:0.000px;-webkit-text-stroke:0.05px currentColor;">software for</div>
<div class="t" style="left:147.00px;top:828.00px;font-size:18.4px;color:#0f5fc9;font-weight:normal;letter-spacing:0.000px;-webkit-text-stroke:0.05px currentColor;">nonprofits</div>
<div class="t" style="left:332.80px;top:758.00px;font-size:14.5px;color:#1a5fbf;font-weight:bold;letter-spacing:0.000px;-webkit-text-stroke:0;">I</div>
<div class="t" style="left:510.40px;top:757.00px;font-size:17.5px;color:#171a22;font-weight:normal;letter-spacing:0.800px;">3</div>
<div class="t" style="left:580.90px;top:757.00px;font-size:17.5px;color:#747784;font-weight:normal;letter-spacing:0.000px;">8</div>
<div class="t" style="left:760.60px;top:757.00px;font-size:17.5px;color:#171a22;font-weight:normal;letter-spacing:0.800px;">9</div>
<div class="t" style="left:910.27px;top:757.00px;font-size:17.5px;color:#171a22;font-weight:normal;letter-spacing:0.800px;">5.42</div>
<div class="t" style="left:1092.03px;top:757.00px;font-size:17.5px;color:#171a22;font-weight:normal;letter-spacing:0.800px;">720</div>
<div class="t" style="left:1253.87px;top:757.00px;font-size:17.5px;color:#171a22;font-weight:normal;letter-spacing:0.800px;">24</div>
<div class="t" style="left:1321.00px;top:754.00px;font-size:18.4px;color:#0f5fc9;font-weight:normal;letter-spacing:0.064px;-webkit-text-stroke:0.05px currentColor;">www.waveapps.com/ac</div>
<div class="t" style="left:1320.00px;top:774.00px;font-size:18.4px;color:#0f5fc9;font-weight:normal;letter-spacing:0.194px;-webkit-text-stroke:0.05px currentColor;">counting/nonprofit</div>
</body></html>
